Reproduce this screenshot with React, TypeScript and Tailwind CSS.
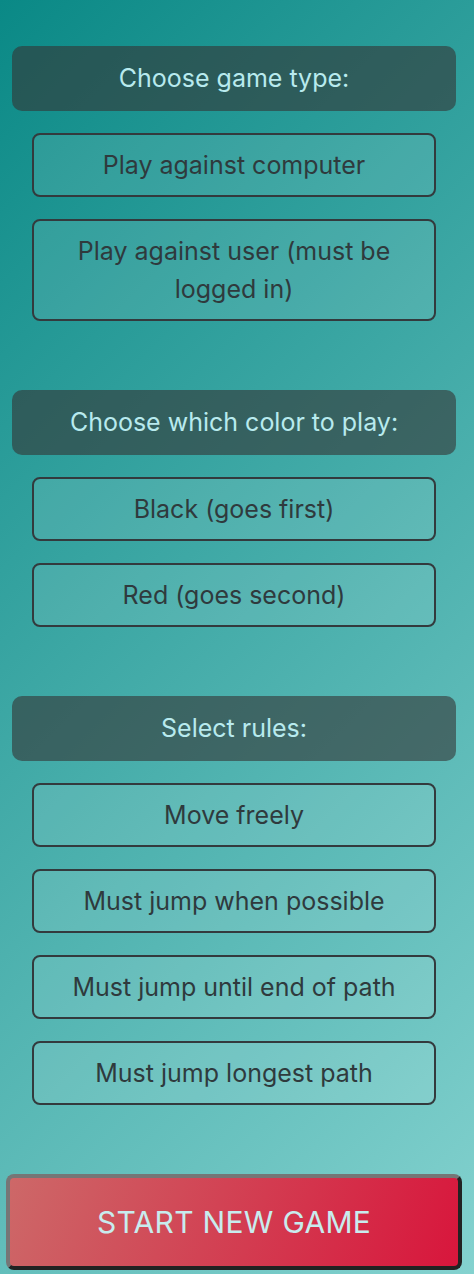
const sections = [
  {
    title: 'Choose game type:',
    options: ['Play against computer', 'Play against user (must be logged in)'],
  },
  {
    title: 'Choose which color to play:',
    options: ['Black (goes first)', 'Red (goes second)'],
  },
  {
    title: 'Select rules:',
    options: ['Move freely', 'Must jump when possible', 'Must jump until end of path', 'Must jump longest path'],
  },
];

export default function App() {
  return (
    <div
      className="min-h-screen w-full bg-linear-135/srgb from-[#0a8986] to-[#84d2cf] pt-[46px] pb-1"
      style={{ fontFamily: 'Inter, "Noto Sans", sans-serif' }}
    >
      <div className="w-[468px] flex flex-col gap-[69px]">
        {sections.map((s) => (
          <div key={s.title} className="flex flex-col gap-[22px]">
            <div className="mx-3 h-[65px] rounded-[10px] bg-[#333333]/60 flex items-center justify-center text-[25px] text-[#b8eaee]">
              {s.title}
            </div>
            {s.options.map((o) => (
              <button
                key={o}
                className="mx-8 rounded-lg border-2 border-[#333a3d] bg-white/10 px-6 py-[11px] text-[25px] leading-[38px] text-[#2f3a3d] text-center"
              >
                {o}
              </button>
            ))}
          </div>
        ))}
        <button className="mx-[6px] h-[96px] rounded-lg border-4 border-t-[#767676] border-l-[#767676] border-r-[#222222] border-b-[#222222] bg-linear-110/srgb from-[#cd6868] to-[#d8163c] text-[30px] text-[#c8ecee] tracking-[0.01em]">
          START NEW GAME
        </button>
      </div>
    </div>
  );
}
